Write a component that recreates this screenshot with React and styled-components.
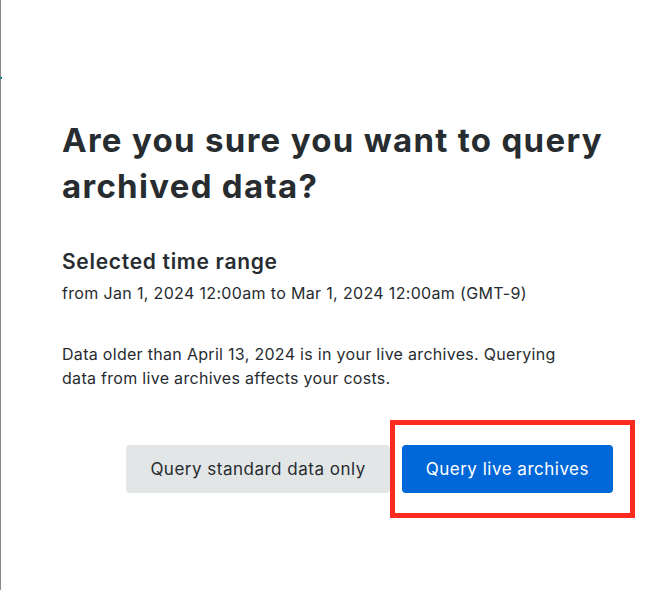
import styled, { createGlobalStyle } from "styled-components";

const GlobalStyle = createGlobalStyle`
  html, body {
    margin: 0;
    padding: 0;
    background: #ffffff;
  }
  body {
    font-family: "Inter", "Noto Sans", sans-serif;
    color: #272c30;
    -webkit-font-smoothing: antialiased;
  }
`;

const App = () => {
  return (
    <>
      <GlobalStyle />
      <Dialog>
        <Title>Are you sure you want to query archived data?</Title>
        <RangeSection>
          <SectionHeading>Selected time range</SectionHeading>
          <RangeText>
            from Jan 1, 2024 12:00am to Mar 1, 2024 12:00am (GMT-9)
          </RangeText>
        </RangeSection>
        <Notice>
          Data older than April 13, 2024 is in your live archives. Querying
          data from live archives affects your costs.
        </Notice>
        <Actions>
          <Button>Query standard data only</Button>
          <Highlight>
            <Button $primary>Query live archives</Button>
          </Highlight>
        </Actions>
      </Dialog>
    </>
  );
};

export const Dialog = styled.div`
  position: relative;
  box-sizing: border-box;
  width: 660px;
  height: 590px;
  border-left: 1px solid #8a8a8a;
  padding: 117px 47px 0 61px;
  display: flex;
  flex-direction: column;

  &::before {
    content: "";
    position: absolute;
    left: -1px;
    top: 77px;
    width: 2px;
    height: 2px;
    background: #13877f;
  }
`;

export const Title = styled.h1`
  margin: 0;
  font-size: 33px;
  line-height: 46px;
  font-weight: 700;
  letter-spacing: 1.3px;
  color: #272c30;
`;

export const RangeSection = styled.div`
  display: flex;
  flex-direction: column;
  gap: 5px;
  margin-top: 39px;
`;

export const SectionHeading = styled.h2`
  margin: 0;
  font-size: 21px;
  line-height: 28px;
  font-weight: 600;
  letter-spacing: 0.7px;
  color: #272c30;
`;

export const RangeText = styled.div`
  font-size: 16px;
  line-height: 24px;
  letter-spacing: 0.34px;
  color: #272c30;
`;

export const Notice = styled.p`
  max-width: 510px;
  margin: 37px 0 0;
  font-size: 16px;
  line-height: 24px;
  letter-spacing: 0.3px;
  color: #272c30;
`;

export const Actions = styled.div`
  display: flex;
  justify-content: flex-end;
  gap: 12px;
  margin-top: 55px;
`;

export const Highlight = styled.div`
  position: relative;

  &::after {
    content: "";
    position: absolute;
    left: -12px;
    right: -22px;
    top: -25px;
    bottom: -25px;
    border: 5px solid #fb2b1f;
    pointer-events: none;
  }
`;

export const Button = styled.button`
  box-sizing: border-box;
  height: 48px;
  padding: 0 24px;
  border: none;
  border-radius: 4px;
  font-family: "Inter", "Noto Sans", sans-serif;
  font-size: 17px;
  font-weight: 400;
  letter-spacing: 0.5px;
  cursor: pointer;
  background: ${(p) => (p.$primary ? "#0067d9" : "#e3e6e7")};
  color: ${(p) => (p.$primary ? "#ffffff" : "#272c30")};
`;

export default App;
